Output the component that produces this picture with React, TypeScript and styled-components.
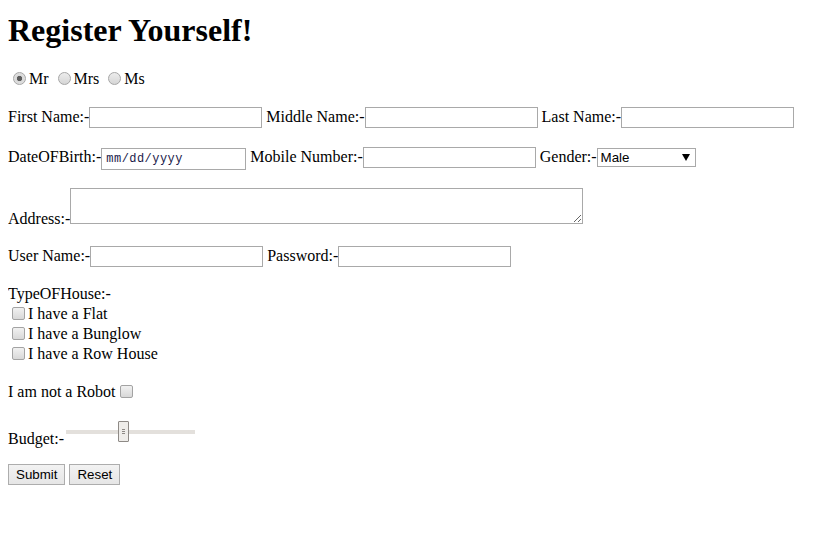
import React from "react";
import styled, { createGlobalStyle } from "styled-components";

const Global = createGlobalStyle`
  html, body { background: #fff; }
  body {
    margin: 8px;
    font-family: "Liberation Serif", "Times New Roman", serif;
    font-size: 16px;
    color: #000;
  }
`;

const Title = styled.h1`
  font-size: 32px;
  font-weight: bold;
  margin: 4px 0 0;
  line-height: 37px;
`;

const Form = styled.form`
  display: flex;
  flex-direction: column;
`;

const Row = styled.div<{ $gap: number }>`
  margin-top: ${(p) => p.$gap}px;
  line-height: 18px;
  white-space: nowrap;
`;

const Radio = styled.input.attrs({ type: "radio" })`
  appearance: none;
  width: 13px;
  height: 13px;
  margin: 3px 3px 0 5px;
  border: 1px solid #a6a6a6;
  border-radius: 50%;
  box-sizing: border-box;
  background: linear-gradient(#ececec, #d6d6d6);
  vertical-align: -1px;
  &:checked {
    background: radial-gradient(circle, #5d5d5d 0 2.3px, #d8d8d8 3px, #e6e6e6 100%);
  }
`;

const Check = styled.input.attrs({ type: "checkbox" })`
  appearance: none;
  width: 13px;
  height: 13px;
  margin: 0 3px 0 4px;
  border: 1px solid #a3a3a3;
  border-radius: 2px;
  box-sizing: border-box;
  background: linear-gradient(#f1f1f1, #d8d8d8);
  vertical-align: -1px;
`;

const TextField = styled.input<{ $w?: number }>`
  box-sizing: border-box;
  width: ${(p) => p.$w ?? 173}px;
  height: 21px;
  margin: 0;
  padding: 1px 2px;
  border: 1px solid #a9a9a9;
  border-radius: 0;
  background: #fff;
  font-family: "Liberation Sans", Arial, sans-serif;
  font-size: 13.33px;
  vertical-align: baseline;
  outline: none;
`;

const DateField = styled.input`
  box-sizing: border-box;
  width: 145px;
  height: 22px;
  margin: 0;
  padding: 1px 4px;
  border: 1px solid #a9a9a9;
  background: #fff;
  font-family: "Liberation Mono", "Courier New", monospace;
  font-size: 12px;
  letter-spacing: 0.45px;
  color: #1a1a4a;
  outline: none;
  &::placeholder { color: #1a1a4a; opacity: 1; }
`;

const SelectWrap = styled.span`
  position: relative;
  display: inline-block;
`;

const Select = styled.select`
  appearance: none;
  box-sizing: border-box;
  width: 99px;
  height: 19px;
  margin: 0;
  padding: 0 0 0 3px;
  border: 1px solid #a9a9a9;
  border-radius: 0;
  background: #fff;
  font-family: "Liberation Sans", Arial, sans-serif;
  font-size: 13.33px;
  color: #000;
  outline: none;
`;

const Arrow = styled.svg`
  position: absolute;
  right: 6px;
  top: 6px;
  width: 8px;
  height: 7px;
  pointer-events: none;
`;

const Area = styled.textarea`
  box-sizing: border-box;
  width: 513px;
  height: 36px;
  margin: 0;
  border: 1px solid #a9a9a9;
  vertical-align: baseline;
  font-family: "Liberation Mono", monospace;
  font-size: 13px;
  outline: none;
`;

const Stack = styled.div`
  display: flex;
  flex-direction: column;
  line-height: 20px;
`;

const CheckLine = styled.label`
  display: block;
  height: 20px;
  line-height: 20px;
`;

const Slider = styled.input.attrs({ type: "range" })`
  appearance: none;
  -webkit-appearance: none;
  width: 129px;
  height: 21px;
  margin: 0 0 0 2px;
  background: transparent;
  vertical-align: 2px;
  &::-webkit-slider-runnable-track {
    height: 4px;
    background: #e3e0dc;
  }
  &::-webkit-slider-thumb {
    -webkit-appearance: none;
    width: 11px;
    height: 21px;
    margin-top: -9px;
    box-sizing: border-box;
    border: 1px solid #8e8a86;
    border-radius: 1px;
    background:
      linear-gradient(#8e8a86, #8e8a86) 3px 7px / 3px 1px no-repeat,
      linear-gradient(#8e8a86, #8e8a86) 3px 9px / 3px 1px no-repeat,
      linear-gradient(#8e8a86, #8e8a86) 3px 11px / 3px 1px no-repeat,
      #efedea;
  }
`;

const Buttons = styled.div`
  display: flex;
  gap: 4px;
  margin-top: 16px;
`;

const Button = styled.button`
  box-sizing: border-box;
  height: 21px;
  padding: 0 7px;
  border: 1px solid #adadad;
  border-radius: 0;
  background: linear-gradient(#f2f2f2, #e6e6e6);
  font-family: "Liberation Sans", Arial, sans-serif;
  font-size: 13.33px;
  color: #000;
`;

export default function App() {
  return (
    <>
      <Global />
      <Title>Register Yourself!</Title>
      <Form onSubmit={(e) => e.preventDefault()}>
        <Row $gap={20}>
          <Radio name="t" defaultChecked />Mr <Radio name="t" />Mrs <Radio name="t" />Ms
        </Row>
        <Row $gap={19}>
          First Name:-<TextField /> Middle Name:-<TextField /> Last Name:-<TextField />
        </Row>
        <Row $gap={19}>
          DateOFBirth:-<DateField placeholder="mm/dd/yyyy" /> Mobile Number:-<TextField />{" "}
          Gender:-
          <SelectWrap>
            <Select defaultValue="Male">
              <option>Male</option>
              <option>Female</option>
            </Select>
            <Arrow viewBox="0 0 8 7">
              <path d="M0 0h8L4 7z" fill="#000" />
            </Arrow>
          </SelectWrap>
        </Row>
        <Row $gap={18}>
          Address:-<Area />
        </Row>
        <Row $gap={18}>
          User Name:-<TextField /> Password:-<TextField type="password" />
        </Row>
        <Row $gap={17}>
          <Stack>
            <span>TypeOFHouse:-</span>
            <CheckLine>
              <Check />I have a Flat
            </CheckLine>
            <CheckLine>
              <Check />I have a Bunglow
            </CheckLine>
            <CheckLine>
              <Check />I have a Row House
            </CheckLine>
          </Stack>
        </Row>
        <Row $gap={19}>
          I am not a Robot<Check />
        </Row>
        <Row $gap={20}>
          Budget:-<Slider defaultValue={44} />
        </Row>
        <Buttons>
          <Button type="submit">Submit</Button>
          <Button type="reset">Reset</Button>
        </Buttons>
      </Form>
    </>
  );
}
